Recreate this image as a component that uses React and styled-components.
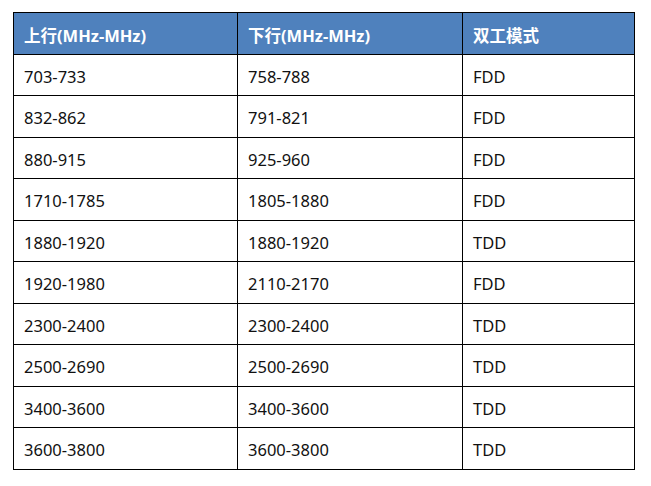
import React from "react";
import styled, { createGlobalStyle } from "styled-components";

const GlobalStyle = createGlobalStyle`
  body {
    margin: 0;
    background: #fff;
    font-family: "Noto Sans", "Noto Sans CJK SC", sans-serif;
  }
`;

const rows = [
  ["703-733", "758-788", "FDD"],
  ["832-862", "791-821", "FDD"],
  ["880-915", "925-960", "FDD"],
  ["1710-1785", "1805-1880", "FDD"],
  ["1880-1920", "1880-1920", "TDD"],
  ["1920-1980", "2110-2170", "FDD"],
  ["2300-2400", "2300-2400", "TDD"],
  ["2500-2690", "2500-2690", "TDD"],
  ["3400-3600", "3400-3600", "TDD"],
  ["3600-3800", "3600-3800", "TDD"],
];

const Page = styled.div`
  padding: 12px 0 0 13px;
`;

const Table = styled.table`
  border-collapse: collapse;
  table-layout: fixed;
  font-size: 16.5px;
  color: #111;
`;

const Row = styled.tr`
  height: 41.5px;
`;

const HeadCell = styled.th`
  background: #4f81bd;
  color: #fff;
  font-weight: 700;
  text-align: left;
  padding: 3px 10px 0;
  border: 1px solid #000;
  width: ${({ $w }) => $w - 20}px;
`;

const Cell = styled.td`
  padding: 3px 10px 0;
  border: 1px solid #000;
`;

export default function App() {
  return (
    <Page>
      <GlobalStyle />
      <Table>
        <thead>
          <Row>
            <HeadCell $w={223}>上行(MHz-MHz)</HeadCell>
            <HeadCell $w={224}>下行(MHz-MHz)</HeadCell>
            <HeadCell $w={171}>双工模式</HeadCell>
          </Row>
        </thead>
        <tbody>
          {rows.map((r, i) => (
            <Row key={`band_${i}`}>
              {r.map((c, j) => (
                <Cell key={j}>{c}</Cell>
              ))}
            </Row>
          ))}
        </tbody>
      </Table>
    </Page>
  );
}
